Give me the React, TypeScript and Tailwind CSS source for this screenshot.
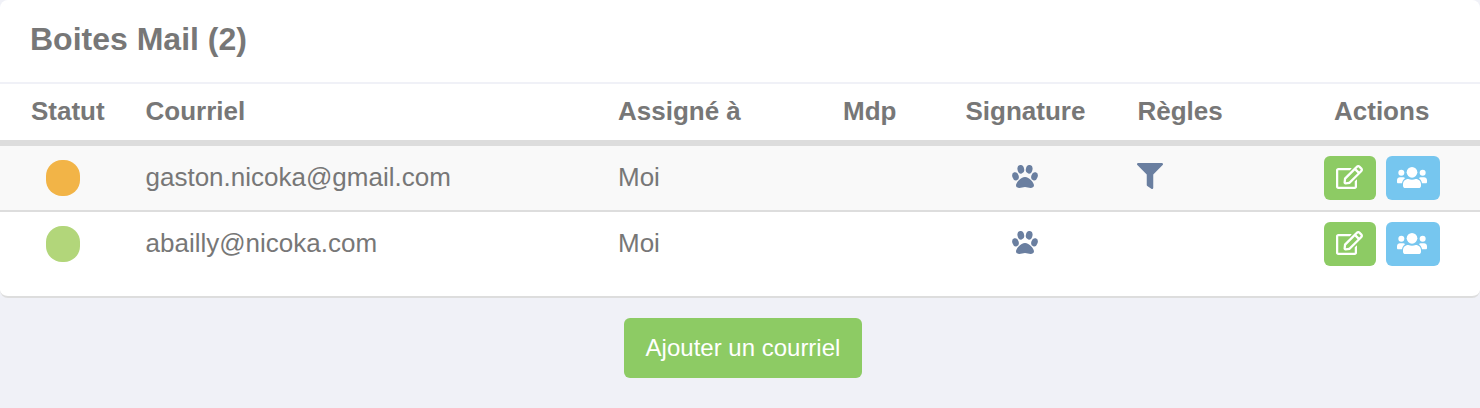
import { FaFilter, FaRegEdit } from "react-icons/fa";

type Mailbox = {
  email: string;
  owner: string;
  statusClass: string;
  hasRules: boolean;
};

const mailboxes: Mailbox[] = [
  { email: "gaston.nicoka@gmail.com", owner: "Moi", statusClass: "bg-[#f2b447]", hasRules: true },
  { email: "abailly@nicoka.com", owner: "Moi", statusClass: "bg-[#b2d67a]", hasRules: false },
];

function PawIcon() {
  return (
    <svg viewBox="0 0 78 69" className="w-[26px] h-[23px] text-[#6a7fa0]" fill="currentColor">
      <ellipse cx="10.5" cy="34" rx="9.5" ry="12.5" transform="rotate(-18 10.5 34)" />
      <ellipse cx="26.5" cy="13" rx="10" ry="13" transform="rotate(-12 26.5 13)" />
      <ellipse cx="51.5" cy="13" rx="10" ry="13" transform="rotate(12 51.5 13)" />
      <ellipse cx="67.5" cy="34" rx="9.5" ry="12.5" transform="rotate(18 67.5 34)" />
      <path d="M39 36c13 0 27 17 27 25 0 6-5 8-10 8-6 0-11-3-17-3s-11 3-17 3c-5 0-10-2-10-8 0-8 14-25 27-25z" />
    </svg>
  );
}

function UsersIcon() {
  return (
    <svg viewBox="0 0 90 63" className="w-[30px] h-[21px]" fill="currentColor">
      <circle cx="45" cy="16" r="16" />
      <circle cx="13" cy="17" r="9" />
      <circle cx="77" cy="17" r="9" />
      <path d="M9 31h8c3 0 6 1 7 3-5 4-8 9-9 15H4c-3 0-4-2-4-4v-5c0-5 4-9 9-9z" />
      <path d="M81 31h-8c-3 0-6 1-7 3 5 4 8 9 9 15h11c3 0 4-2 4-4v-5c0-5-4-9-9-9z" />
      <path d="M34 36c7 3 15 3 22 0 10 0 16 7 16 16v4c0 4-3 7-7 7H25c-4 0-7-3-7-7v-4c0-9 6-16 16-16z" />
    </svg>
  );
}

function MailboxRow({ mailbox }: { mailbox: Mailbox }) {
  return (
    <tr className="h-[66px] odd:bg-[#f9f9f9] *:border-b-2 *:border-[#ddd] last:*:border-transparent">
      <td className="pl-[46px]">
        <span className={`block w-[34px] h-9 rounded-2xl ${mailbox.statusClass}`} />
      </td>
      <td className="pl-[15.5px] pb-0.5">{mailbox.email}</td>
      <td className="pl-4 pb-0.5">{mailbox.owner}</td>
      <td />
      <td className="pl-[62px] pb-[3px]">
        <PawIcon />
      </td>
      <td className="pl-[15px] pb-1">
        {mailbox.hasRules && <FaFilter className="size-[26px] text-[#6a7fa0]" />}
      </td>
      <td className="pl-4">
        <div className="flex gap-2.5 text-white">
          <button
            className="flex items-center justify-center w-[52px] h-11 pr-px pb-0.5 rounded-md bg-[#8dcb64]"
            aria-label="Modifier"
          >
            <FaRegEdit className="w-[27px] h-6" />
          </button>
          <button
            className="flex items-center justify-center w-[54px] h-11 pr-0.5 pb-px rounded-md bg-[#76c6ef]"
            aria-label="Partager"
          >
            <UsersIcon />
          </button>
        </div>
      </td>
    </tr>
  );
}

export default function App() {
  return (
    <div className="h-screen overflow-hidden bg-[#f0f1f7] font-['Liberation_Sans',Arial,sans-serif] text-[#777]">
      <section className="h-[298px] rounded-lg border-b-2 border-[#ddd] bg-white">
        <h2 className="h-[84px] pl-[30px] pt-4 border-b-2 border-[#f0f1f7] text-[32px] leading-[46px] font-bold">
          Boites Mail (2)
        </h2>
        <table className="w-full table-fixed border-separate border-spacing-0 text-left text-[26px] leading-9">
          <colgroup>
            <col className="w-[130px]" />
            <col className="w-[472px]" />
            <col className="w-[225px]" />
            <col className="w-[123px]" />
            <col className="w-[172px]" />
            <col className="w-[186px]" />
            <col className="w-[172px]" />
          </colgroup>
          <thead>
            <tr className="h-[62px] *:border-b-6 *:border-[#ddd] *:pb-0.5">
              <th className="pl-[31px]">Statut</th>
              <th className="pl-[15.5px]">Courriel</th>
              <th className="pl-4">Assigné à</th>
              <th className="pl-4">Mdp</th>
              <th className="pl-[15.5px]">Signature</th>
              <th className="pl-[15.5px]">Règles</th>
              <th className="pl-[26px]">Actions</th>
            </tr>
          </thead>
          <tbody>
            {mailboxes.map((mailbox) => (
              <MailboxRow key={mailbox.email} mailbox={mailbox} />
            ))}
          </tbody>
        </table>
      </section>
      <div className="flex justify-center pt-5 pl-1.5">
        <button className="w-[238px] h-[60px] rounded-md bg-[#8dcb64] text-2xl text-white">Ajouter un courriel</button>
      </div>
    </div>
  );
}
